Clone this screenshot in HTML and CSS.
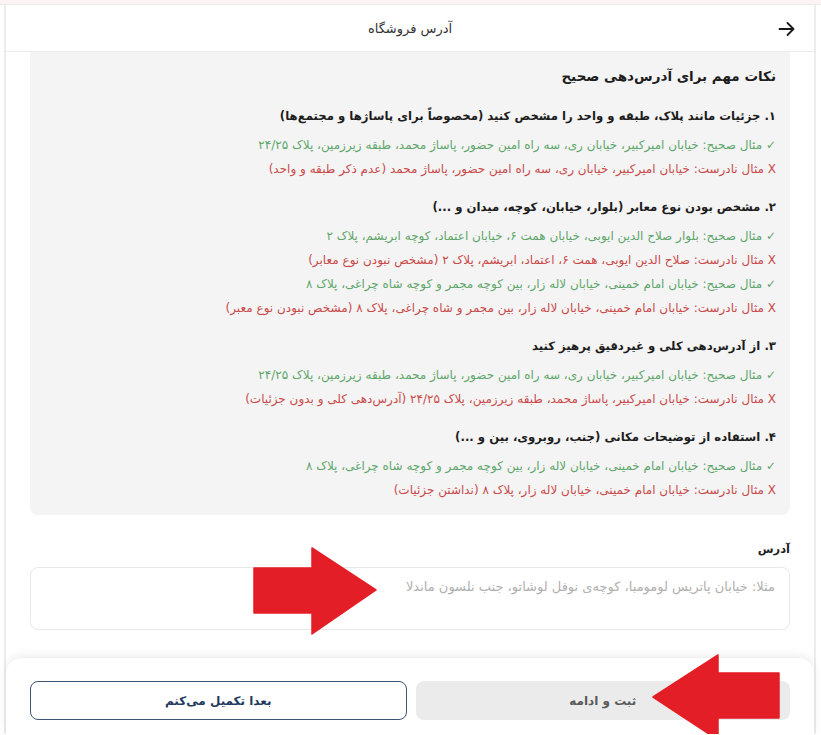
FILE: index.html
```html
<!DOCTYPE html>
<html lang="fa" dir="rtl">
<head>
<meta charset="utf-8">
<title>آدرس فروشگاه</title>
<link rel="stylesheet" href="styles.css">
</head>
<body>
<div class="strip"></div>
<div class="page">
  <header class="header">
    <button class="back" aria-label="بازگشت">
      <svg width="18" height="18" viewBox="0 0 18 18"><path d="M1.5 9h14M9.5 3l6 6-6 6" fill="none" stroke="#1a1a1a" stroke-width="1.8" stroke-linecap="round" stroke-linejoin="round"/></svg>
    </button>
    <h1 class="title">آدرس فروشگاه</h1>
  </header>

  <main class="content">
    <section class="tips">
      <h2 class="tips-title">نکات مهم برای آدرس‌دهی صحیح</h2>

      <h3 class="tip-head">۱. جزئیات مانند پلاک، طبقه و واحد را مشخص کنید (مخصوصاً برای پاساژها و مجتمع‌ها)</h3>
      <p class="ok">✓ مثال صحیح: خیابان امیرکبیر، خیابان ری، سه راه امین حضور، پاساژ محمد، طبقه زیرزمین، پلاک ۲۴/۲۵</p>
      <p class="bad">X مثال نادرست: خیابان امیرکبیر، خیابان ری، سه راه امین حضور، پاساژ محمد (عدم ذکر طبقه و واحد)</p>

      <h3 class="tip-head">۲. مشخص بودن نوع معابر (بلوار، خیابان، کوچه، میدان و ...)</h3>
      <p class="ok">✓ مثال صحیح: بلوار صلاح الدین ایوبی، خیابان همت ۶، خیابان اعتماد، کوچه ابریشم، پلاک ۲</p>
      <p class="bad">X مثال نادرست: صلاح الدین ایوبی، همت ۶، اعتماد، ابریشم، پلاک ۲ (مشخص نبودن نوع معابر)</p>
      <p class="ok">✓ مثال صحیح: خیابان امام خمینی، خیابان لاله زار، بین کوچه مجمر و کوچه شاه چراغی، پلاک ۸</p>
      <p class="bad">X مثال نادرست: خیابان امام خمینی، خیابان لاله زار، بین مجمر و شاه چراغی، پلاک ۸ (مشخص نبودن نوع معبر)</p>

      <h3 class="tip-head">۳. از آدرس‌دهی کلی و غیردقیق پرهیز کنید</h3>
      <p class="ok">✓ مثال صحیح: خیابان امیرکبیر، خیابان ری، سه راه امین حضور، پاساژ محمد، طبقه زیرزمین، پلاک ۲۴/۲۵</p>
      <p class="bad">X مثال نادرست: خیابان امیرکبیر، پاساژ محمد، طبقه زیرزمین، پلاک ۲۴/۲۵ (آدرس‌دهی کلی و بدون جزئیات)</p>

      <h3 class="tip-head">۴. استفاده از توضیحات مکانی (جنب، روبروی، بین و ...)</h3>
      <p class="ok">✓ مثال صحیح: خیابان امام خمینی، خیابان لاله زار، بین کوچه مجمر و کوچه شاه چراغی، پلاک ۸</p>
      <p class="bad">X مثال نادرست: خیابان امام خمینی، خیابان لاله زار، پلاک ۸ (نداشتن جزئیات)</p>
    </section>

    <label class="field-label" for="addr">آدرس</label>
    <textarea id="addr" class="field" placeholder="مثلا: خیابان پاتریس لومومبا، کوچه‌ی نوفل لوشاتو، جنب نلسون ماندلا"></textarea>
  </main>

  <footer class="actions">
    <button class="btn btn-primary">ثبت و ادامه</button>
    <button class="btn btn-outline">بعدا تکمیل می‌کنم</button>
  </footer>
</div>

<svg class="red-arrow arrow-right" width="124" height="88" viewBox="0 0 124 88"><polygon points="1,21 59,21 59,1 123,43 59,87 59,66 1,66" fill="#e41e26" stroke="#e41e26" stroke-width="1.5" stroke-linejoin="round"/></svg>
<svg class="red-arrow arrow-left" width="128" height="81" viewBox="0 0 128 81"><polygon points="1,43 66,1 66,19 127,19 127,64 66,64 66,86" fill="#e41e26" stroke="#e41e26" stroke-width="1.5" stroke-linejoin="round"/></svg>
</body>
</html>
```

FILE: styles.css
```css
* { box-sizing: border-box; }
html, body { margin: 0; padding: 0; }
body {
  position: relative;
  background: #fff;
  font-family: "DejaVu Sans", sans-serif;
  color: #222;
  overflow: hidden;
}
.strip {
  height: 5px;
  background: #fcf3f5;
  border-bottom: 1px solid #efe9ea;
}
.page {
  margin: 0 5px 0 4px;
  border-left: 2px solid #ececec;
  border-right: 2px solid #ececec;
  display: flex;
  flex-direction: column;
}
.header {
  height: 47px;
  border-bottom: 1px solid #ececec;
  display: flex;
  align-items: center;
  justify-content: center;
  position: relative;
}
.back {
  position: absolute;
  right: 18px;
  top: 15px;
  background: none;
  border: 0;
  padding: 0;
  width: 18px;
  height: 18px;
  display: flex;
}
.title {
  margin: 0;
  font-size: 13px;
  font-weight: normal;
  color: #333;
}
.content {
  padding: 0 24px;
  display: flex;
  flex-direction: column;
}
.tips {
  background: #f4f4f4;
  border-radius: 0 0 8px 8px;
  padding: 12px 14px 13px;
}
.tips-title {
  margin: 0 0 16px;
  font-size: 13.5px;
  line-height: 24px;
  font-weight: bold;
  color: #1d1d1d;
}
.tip-head {
  margin: 14px 0 5px;
  font-size: 11.7px;
  line-height: 24px;
  font-weight: bold;
  color: #1d1d1d;
}
.tips-title + .tip-head { margin-top: 0; }
.ok, .bad {
  margin: 0;
  font-size: 12px;
  line-height: 24px;
  white-space: nowrap;
}
.ok { color: #5ea66b; }
.bad { color: #c94a4a; }
.field-label {
  margin-top: 24px;
  font-size: 11.5px;
  line-height: 20px;
  font-weight: bold;
  color: #222;
}
.field {
  margin-top: 8px;
  height: 63px;
  border: 1px solid #e8e8e8;
  border-radius: 8px;
  padding: 9px 14px;
  font-family: inherit;
  font-size: 13px;
  line-height: 20px;
  resize: none;
  background: #fff;
}
.field::placeholder { color: #b0b0b0; }
.actions {
  margin-top: 27px;
  padding: 23px 24px 14px;
  border-radius: 16px 16px 0 0;
  box-shadow: 0 -2px 10px rgba(0,0,0,0.07);
  border-top: 1px solid #f0f0f0;
  display: flex;
  gap: 9px;
}
.btn {
  flex: 1;
  height: 39px;
  border-radius: 8px;
  font-family: inherit;
  font-size: 12px;
  font-weight: bold;
}
.btn-primary {
  background: #ebebeb;
  border: 0;
  color: #5a5a5a;
}
.btn-outline {
  background: #fff;
  border: 1px solid #3c5470;
  color: #1f3a5f;
}
.red-arrow { position: absolute; }
.arrow-right { left: 253px; top: 547px; }
.arrow-left { left: 652px; top: 654px; }
```
